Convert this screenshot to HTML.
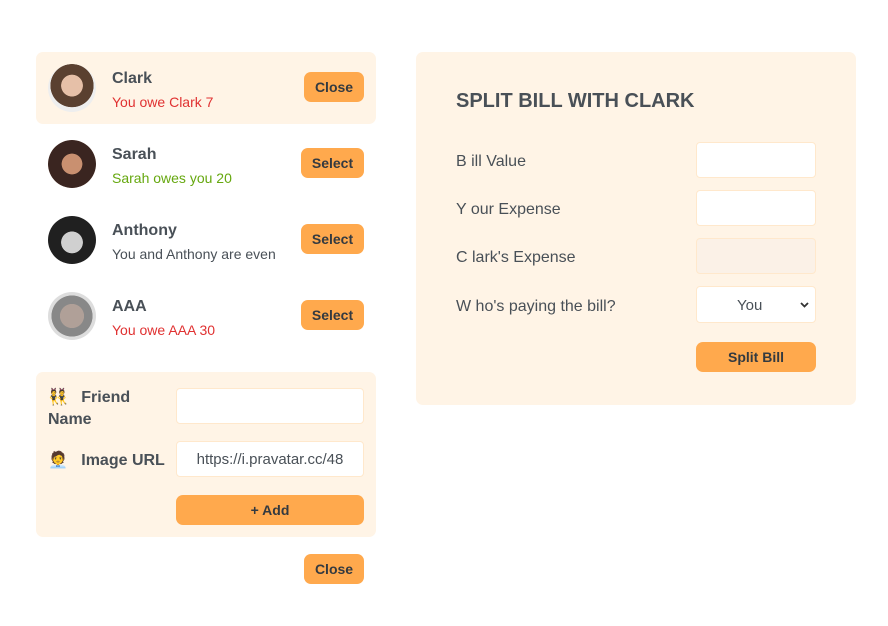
<!DOCTYPE html>
<html><head><style>
*{box-sizing:border-box;margin:0;padding:0}
body{width:888px;height:626px;background:#fff;font-family:"Liberation Sans","DejaVu Sans",sans-serif;color:#495057;position:relative;overflow:hidden}
.a{position:absolute}
.panel{background:#fff4e6;border-radius:7px}
.btn{position:absolute;background:#ffa94d;border-radius:7px;font-weight:bold;font-size:14px;color:#343a40;display:flex;align-items:center;justify-content:center}
.av{position:absolute;width:48px;height:48px;border-radius:50%}
.nm{position:absolute;left:112px;font-size:16px;font-weight:bold}
.sub{position:absolute;left:112px;font-size:14px}
.inp{position:absolute;background:#fff;border:1px solid #ffe8cc;border-radius:4px}
.lbl{position:absolute;font-size:16px;left:456px}
</style></head><body>
<div class="a panel" style="left:36px;top:52px;width:340px;height:72px"></div>
<div class="av" style="left:48px;top:64px;background:radial-gradient(circle at 50% 45%,#e6c0a8 0 30%,#5a4030 31% 60%,#eee 61%)"></div>
<div class="nm" style="top:70px">Clark</div>
<div class="sub" style="top:94px;color:#e03131">You owe Clark 7</div>
<div class="btn" style="left:304px;top:72px;width:60px;height:30px">Close</div>

<div class="av" style="left:48px;top:140px;background:radial-gradient(circle at 50% 50%,#c99070 0 30%,#3a2520 31% 70%,#7a5040 71%)"></div>
<div class="nm" style="top:146px">Sarah</div>
<div class="sub" style="top:170px;color:#66a80f">Sarah owes you 20</div>
<div class="btn" style="left:301px;top:148px;width:63px;height:30px">Select</div>

<div class="av" style="left:48px;top:216px;background:radial-gradient(circle at 50% 55%,#d0d0d0 0 30%,#202020 31%)"></div>
<div class="nm" style="top:222px">Anthony</div>
<div class="sub" style="top:246px">You and Anthony are even</div>
<div class="btn" style="left:301px;top:224px;width:63px;height:30px">Select</div>

<div class="av" style="left:48px;top:292px;background:radial-gradient(circle at 50% 50%,#b0a098 0 35%,#888 36% 60%,#ddd 61%)"></div>
<div class="nm" style="top:298px">AAA</div>
<div class="sub" style="top:322px;color:#e03131">You owe AAA 30</div>
<div class="btn" style="left:301px;top:300px;width:63px;height:30px">Select</div>

<div class="a panel" style="left:36px;top:372px;width:340px;height:165px"></div>
<div class="a" style="left:48px;top:387px;font-size:16px;font-weight:bold;line-height:22px;width:120px">👯&nbsp;&nbsp; Friend Name</div>
<div class="inp" style="left:176px;top:388px;width:188px;height:36px"></div>
<div class="a" style="left:48px;top:450px;font-size:16px;font-weight:bold;line-height:22px">🧑‍💼&nbsp;&nbsp; Image URL</div>
<div class="inp" style="left:176px;top:441px;width:188px;height:36px;font-size:15px;display:flex;align-items:center;justify-content:center">https://i.pravatar.cc/48</div>
<div class="btn" style="left:176px;top:495px;width:188px;height:30px">+ Add</div>
<div class="btn" style="left:304px;top:554px;width:60px;height:30px">Close</div>

<div class="a panel" style="left:416px;top:52px;width:440px;height:353px"></div>
<div class="a" style="left:456px;top:90px;font-size:20px;font-weight:bold;letter-spacing:0px">SPLIT BILL WITH CLARK</div>
<div class="lbl" style="top:153px">B ill Value</div>
<div class="inp" style="left:696px;top:142px;width:120px;height:36px"></div>
<div class="lbl" style="top:201px">Y our Expense</div>
<div class="inp" style="left:696px;top:190px;width:120px;height:36px"></div>
<div class="lbl" style="top:249px">C lark's Expense</div>
<div class="inp" style="left:696px;top:238px;width:120px;height:36px;background:#fbf1e7"></div>
<div class="lbl" style="top:298px">W ho's paying the bill?</div>
<div class="inp" style="left:696px;top:286px;width:120px;height:37px;font-size:15px;padding-left:40px;padding-top:10px">You<svg style="position:absolute;right:6px;top:15px" width="9" height="6" viewBox="0 0 9 6"><path d="M1 1 L4.5 4.5 L8 1" fill="none" stroke="#333" stroke-width="1.8"/></svg></div>
<div class="btn" style="left:696px;top:342px;width:120px;height:30px">Split Bill</div>
</body></html>
